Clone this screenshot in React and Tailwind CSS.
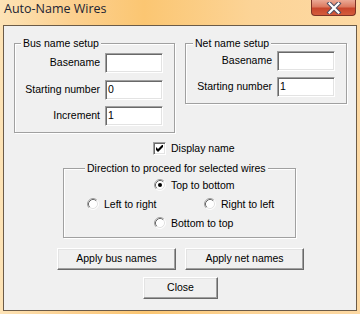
import React from "react";

const sunken =
  "border border-t-[#a0a0a0] border-l-[#a0a0a0] border-r-white border-b-white shadow-[inset_1px_1px_0_#696969,inset_-1px_-1px_0_#e3e3e3]";

const raised =
  "border border-t-white border-l-white border-r-[#696969] border-b-[#696969] shadow-[inset_-1px_-1px_0_#a0a0a0,inset_1px_1px_0_#e3e3e3]";

function Field({ label, value, className = "" }) {
  return (
    <div className={`flex items-center justify-end gap-[5px] ${className}`}>
      <span>{label}</span>
      <div className={`w-[58px] h-[20px] bg-white ${sunken} flex items-center pl-[2px]`}>
        {value}
      </div>
    </div>
  );
}

function Group({ label, labelPos, className = "", children }) {
  return (
    <div
      className={`relative border border-[#a0a0a0] shadow-[1px_1px_0_#ffffff,inset_1px_1px_0_#ffffff] ${className}`}
    >
      <span className={`absolute top-[-7px] bg-[#f0f0f0] px-[2px] leading-[13px] whitespace-nowrap ${labelPos}`}>
        {label}
      </span>
      {children}
    </div>
  );
}

function Radio({ checked, label, className = "" }) {
  return (
    <div className={`flex items-center gap-[5px] h-[12px] ${className}`}>
      <svg width="12" height="12" viewBox="0 0 12 12" className="shrink-0">
        <circle cx="6" cy="6" r="5" fill="#ffffff" />
        <path d="M2.11 9.89 A5.5 5.5 0 0 1 9.89 2.11" fill="none" stroke="#a0a0a0" strokeWidth="1" />
        <path d="M9.89 2.11 A5.5 5.5 0 0 1 2.11 9.89" fill="none" stroke="#ffffff" strokeWidth="1" />
        <path d="M2.82 9.18 A4.5 4.5 0 0 1 9.18 2.82" fill="none" stroke="#696969" strokeWidth="1" />
        <path d="M9.18 2.82 A4.5 4.5 0 0 1 2.82 9.18" fill="none" stroke="#e3e3e3" strokeWidth="1" />
        {checked && <circle cx="6" cy="6" r="2" fill="#000000" />}
      </svg>
      <span className="leading-[12px] whitespace-nowrap">{label}</span>
    </div>
  );
}

function Button({ children, className = "" }) {
  return (
    <div className={`h-[22px] bg-[#f0f0f0] ${raised} flex items-center justify-center ${className}`}>
      {children}
    </div>
  );
}

export default function App() {
  return (
    <div className="w-[360px] h-[314px] flex flex-col bg-[linear-gradient(90deg,#fde3b6_0%,#fcd08f_20%,#fbc672_40%,#fcd497_70%,#fdd9a3_100%)] font-['Liberation_Sans',Arial,sans-serif] text-[10.5px] text-black overflow-hidden">
      {/* title bar */}
      <div className="h-[25px] flex items-start shrink-0">
        <div className="h-[19px] flex items-center pl-[4px] font-['Open_Sans',sans-serif] text-[12.5px] text-[#1b2333]">
          Auto-Name Wires
        </div>
        <div className="ml-auto mr-[4px] w-[45px] h-[16px] rounded-b-[4px] border border-t-0 border-[#7d3326] bg-[linear-gradient(180deg,#eba995_0%,#dc7a60_45%,#c8462c_55%,#d55c3c_100%)] flex items-center justify-center">
          <svg width="20" height="12" viewBox="0 0 20 12">
            <path d="M5.5 1.5 L14.5 10.5 M14.5 1.5 L5.5 10.5" stroke="#4e4e62" strokeWidth="4.2" strokeLinecap="square" />
            <path d="M5.5 1.5 L14.5 10.5 M14.5 1.5 L5.5 10.5" stroke="#ffffff" strokeWidth="2.2" strokeLinecap="square" />
          </svg>
        </div>
      </div>

      {/* client area */}
      <div className="mx-[3px] h-[286px] shrink-0 bg-[#f0f0f0] border border-[#6b5b48] flex flex-col">
        {/* top row */}
        <div className="flex items-start mt-[17px] pl-[10px] gap-[10px]">
          <Group label="Bus name setup" labelPos="left-[6px]" className="w-[161px] h-[90px] pt-[9px] pr-[11px] flex flex-col">
            <Field label="Basename" value="" />
            <Field label="Starting number" value="0" className="mt-[7px]" />
            <Field label="Increment" value="1" className="mt-[6px]" />
          </Group>
          <Group label="Net name setup" labelPos="left-[7px]" className="w-[162px] h-[61px] pt-[7px] pr-[11px] flex flex-col">
            <Field label="Basename" value="" />
            <Field label="Starting number" value="1" className="mt-[6px]" />
          </Group>
        </div>

        {/* checkbox */}
        <div className="mt-[9px] pl-[149px] flex items-center gap-[5px] h-[13px]">
          <div className={`w-[13px] h-[13px] bg-white ${sunken} flex items-center justify-center`}>
            <svg width="7" height="7" viewBox="0 0 7 7">
              <path d="M0 2 L0 5 L2 7 L7 2 L7 -1 L2 4 Z" fill="#000000" />
            </svg>
          </div>
          <span className="leading-[13px]">Display name</span>
        </div>

        {/* direction group */}
        <div className="mt-[13px] pl-[59px] flex">
          <Group
            label="Direction to proceed for selected wires"
            labelPos="left-[21px]"
            className="w-[233px] h-[70px] pt-[10px] flex flex-col gap-[7px]"
          >
            <Radio checked label="Top to bottom" className="pl-[90px]" />
            <div className="flex pl-[23px]">
              <Radio label="Left to right" className="w-[117px]" />
              <Radio label="Right to left" />
            </div>
            <Radio label="Bottom to top" className="pl-[90px]" />
          </Group>
        </div>

        {/* buttons */}
        <div className="mt-[10px] pl-[53px] flex gap-[9px]">
          <Button className="w-[119px]">Apply bus names</Button>
          <Button className="w-[119px]">Apply net names</Button>
        </div>
        <div className="mt-[7px] pl-[139px] flex">
          <Button className="w-[75px]">Close</Button>
        </div>
      </div>
    </div>
  );
}
